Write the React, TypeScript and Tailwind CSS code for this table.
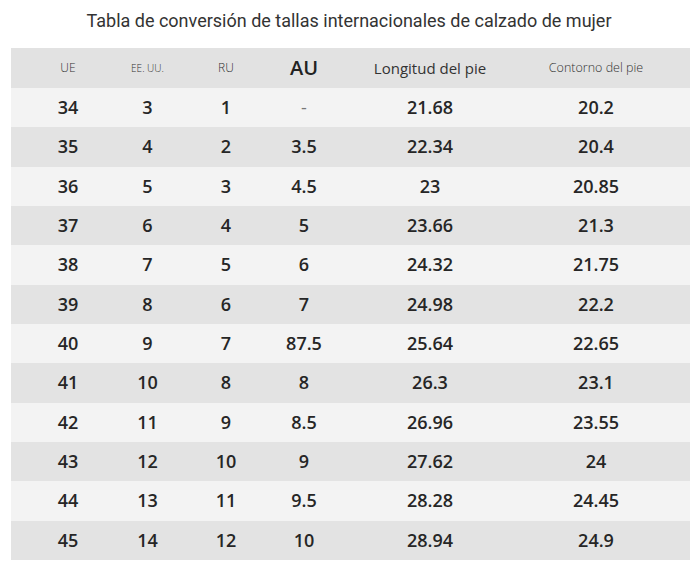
import React from 'react';

const rows: string[][] = [
  ['34', '3', '1', '-', '21.68', '20.2'],
  ['35', '4', '2', '3.5', '22.34', '20.4'],
  ['36', '5', '3', '4.5', '23', '20.85'],
  ['37', '6', '4', '5', '23.66', '21.3'],
  ['38', '7', '5', '6', '24.32', '21.75'],
  ['39', '8', '6', '7', '24.98', '22.2'],
  ['40', '9', '7', '87.5', '25.64', '22.65'],
  ['41', '10', '8', '8', '26.3', '23.1'],
  ['42', '11', '9', '8.5', '26.96', '23.55'],
  ['43', '12', '10', '9', '27.62', '24'],
  ['44', '13', '11', '9.5', '28.28', '24.45'],
  ['45', '14', '12', '10', '28.94', '24.9'],
];

const cols = 'grid grid-cols-[97px_79px_78px_78px_174px_1fr] items-center';

const App: React.FC = () => {
  return (
    <div className="w-[698px] h-[565px] bg-white overflow-hidden" style={{ fontFamily: '"Open Sans", "Noto Sans", sans-serif' }}>
      <h1 className="h-[48px] pt-[7px] text-center text-[18px] text-[#333] font-normal" style={{ fontFamily: 'Roboto, sans-serif' }}>
        Tabla de conversión de tallas internacionales de calzado de mujer
      </h1>

      <div className="mx-[11px] w-[679px]">
        <div className={`${cols} h-[40px] bg-[#e2e2e2] text-[#333]`}>
          <div className="pl-[17px] text-center text-[12px] font-light">UE</div>
          <div className="text-center text-[10px] font-light">EE. UU.</div>
          <div className="text-center text-[12px] font-light">RU</div>
          <div className="text-center text-[20px] font-semibold text-[#222]">AU</div>
          <div className="text-center text-[15px] font-normal">Longitud del pie</div>
          <div className="pr-[15px] text-center text-[12.5px] font-light">Contorno del pie</div>
        </div>

        {rows.map((r, i) => (
          <div
            key={r[0]}
            className={`${cols} h-[39.33px] text-[18px] font-semibold text-[#262626] ${i % 2 === 0 ? 'bg-[#f3f3f3]' : 'bg-[#e3e3e3]'}`}
          >
            <div className="pl-[17px] text-center">{r[0]}</div>
            <div className="text-center">{r[1]}</div>
            <div className="text-center">{r[2]}</div>
            <div className={`text-center ${r[3] === '-' ? 'text-[#777] font-normal' : ''}`}>{r[3]}</div>
            <div className="text-center">{r[4]}</div>
            <div className="pr-[15px] text-center">{r[5]}</div>
          </div>
        ))}
      </div>
    </div>
  );
};

export default App;
